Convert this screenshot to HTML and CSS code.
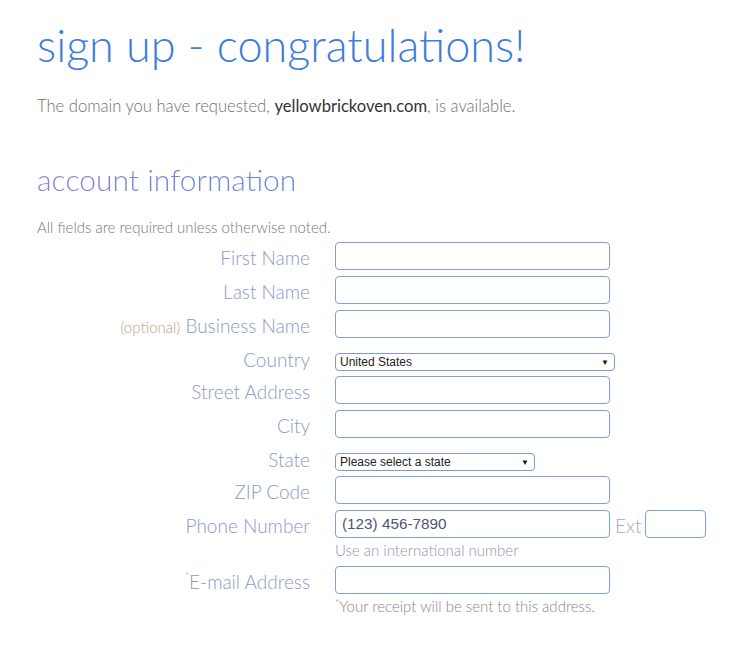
FILE: index.html
```html
<!DOCTYPE html>
<html>
<head>
    <title>Sign up - congratulations!</title>
    <link rel="stylesheet" href="styles.css">
</head>
<body>
    <div class="page">
        <h1 class="title">sign up - congratulations!</h1>
        <p class="domain-note">The domain you have requested, <b>yellowbrickoven.com</b>, is available.</p>

        <h2 class="section-title">account information</h2>
        <p class="required-note">All fields are required unless otherwise noted.</p>

        <form class="account-form">
            <div class="row">
                <label class="label">First Name</label>
                <input class="field" type="text">
            </div>
            <div class="row">
                <label class="label">Last Name</label>
                <input class="field" type="text">
            </div>
            <div class="row">
                <label class="label"><span class="optional">(optional)</span> Business Name</label>
                <input class="field" type="text">
            </div>
            <div class="row row-select">
                <label class="label">Country</label>
                <div class="select country-select">United States<span class="arrow">&#9660;</span></div>
            </div>
            <div class="row">
                <label class="label">Street Address</label>
                <input class="field" type="text">
            </div>
            <div class="row">
                <label class="label">City</label>
                <input class="field" type="text">
            </div>
            <div class="row row-select">
                <label class="label">State</label>
                <div class="select state-select">Please select a state<span class="arrow">&#9660;</span></div>
            </div>
            <div class="row">
                <label class="label">ZIP Code</label>
                <input class="field" type="text">
            </div>
            <div class="row">
                <label class="label">Phone Number</label>
                <input class="field phone" type="text" value="(123) 456-7890">
                <span class="ext-label">Ext</span>
                <input class="field ext" type="text">
            </div>
            <div class="hint">Use an international number</div>
            <div class="row">
                <label class="label"><sup class="star">*</sup>E-mail Address</label>
                <input class="field" type="text">
            </div>
            <div class="hint receipt"><sup class="star">*</sup>Your receipt will be sent to this address.</div>
        </form>
    </div>
</body>
</html>
```

FILE: styles.css
```css
body {
    margin: 0;
    background: #fff;
    font-family: Lato, 'Open Sans', sans-serif;
    font-weight: 300;
}
.page {
    padding: 15px 0 0 37px;
}
.title {
    margin: 0;
    font-size: 45px;
    font-weight: 300;
    line-height: 60px;
    color: #3d7ddc;
}
.domain-note {
    margin: 21px 0 0;
    font-size: 16.6px;
    color: #6f6f6f;
}
.domain-note b {
    font-weight: 400;
    color: #333;
}
.section-title {
    margin: 43px 0 0;
    font-size: 30px;
    font-weight: 300;
    line-height: 40px;
    background: linear-gradient(90deg, #8a80d6, #5a8ce0);
    -webkit-background-clip: text;
    background-clip: text;
    color: transparent;
    display: inline-block;
}
.required-note {
    margin: 19px 0 0;
    font-size: 15px;
    color: #777;
}
.account-form {
    margin-top: 6px;
}
.row {
    display: flex;
    align-items: center;
    height: 28px;
    margin-bottom: 6px;
}
.label {
    width: 273px;
    margin-right: 25px;
    padding-top: 3px;
    text-align: right;
    font-size: 19px;
    color: #8b99c8;
}
.optional {
    font-size: 15px;
    color: #b5a27a;
}
.star {
    font-size: 10px;
    vertical-align: top;
    line-height: 10px;
}
.field {
    box-sizing: border-box;
    width: 275px;
    height: 28px;
    margin: 0;
    padding: 0 6px;
    border: 1px solid #84a0d8;
    border-radius: 4px;
    font-family: 'Liberation Sans', Arial, sans-serif;
    font-size: 15.3px;
    color: #4e5670;
    background: #fff;
}
.field.ext {
    width: 61px;
}
.ext-label {
    margin: 0 4px 0 5px;
    padding-top: 3px;
    font-size: 19px;
    color: #a3abc4;
}
.row-select {
    height: 18px;
    margin-top: 15px;
    margin-bottom: 5px;
}
.row-select .label {
    padding-top: 0;
    margin-top: -5px;
}
.select {
    box-sizing: border-box;
    display: flex;
    align-items: center;
    justify-content: space-between;
    height: 18px;
    padding: 0 5px 0 4px;
    border: 1px solid #7d9ad6;
    border-radius: 4px;
    font-family: 'Liberation Sans', Arial, sans-serif;
    font-size: 12px;
    font-weight: 400;
    color: #222;
}
.country-select {
    width: 280px;
}
.state-select {
    width: 200px;
}
.arrow {
    font-size: 8px;
    color: #111;
}
.hint {
    margin: -3px 0 9px 298px;
    height: 16px;
    font-size: 15px;
    color: #8e96b2;
}
.receipt {
    color: #888;
}
```
